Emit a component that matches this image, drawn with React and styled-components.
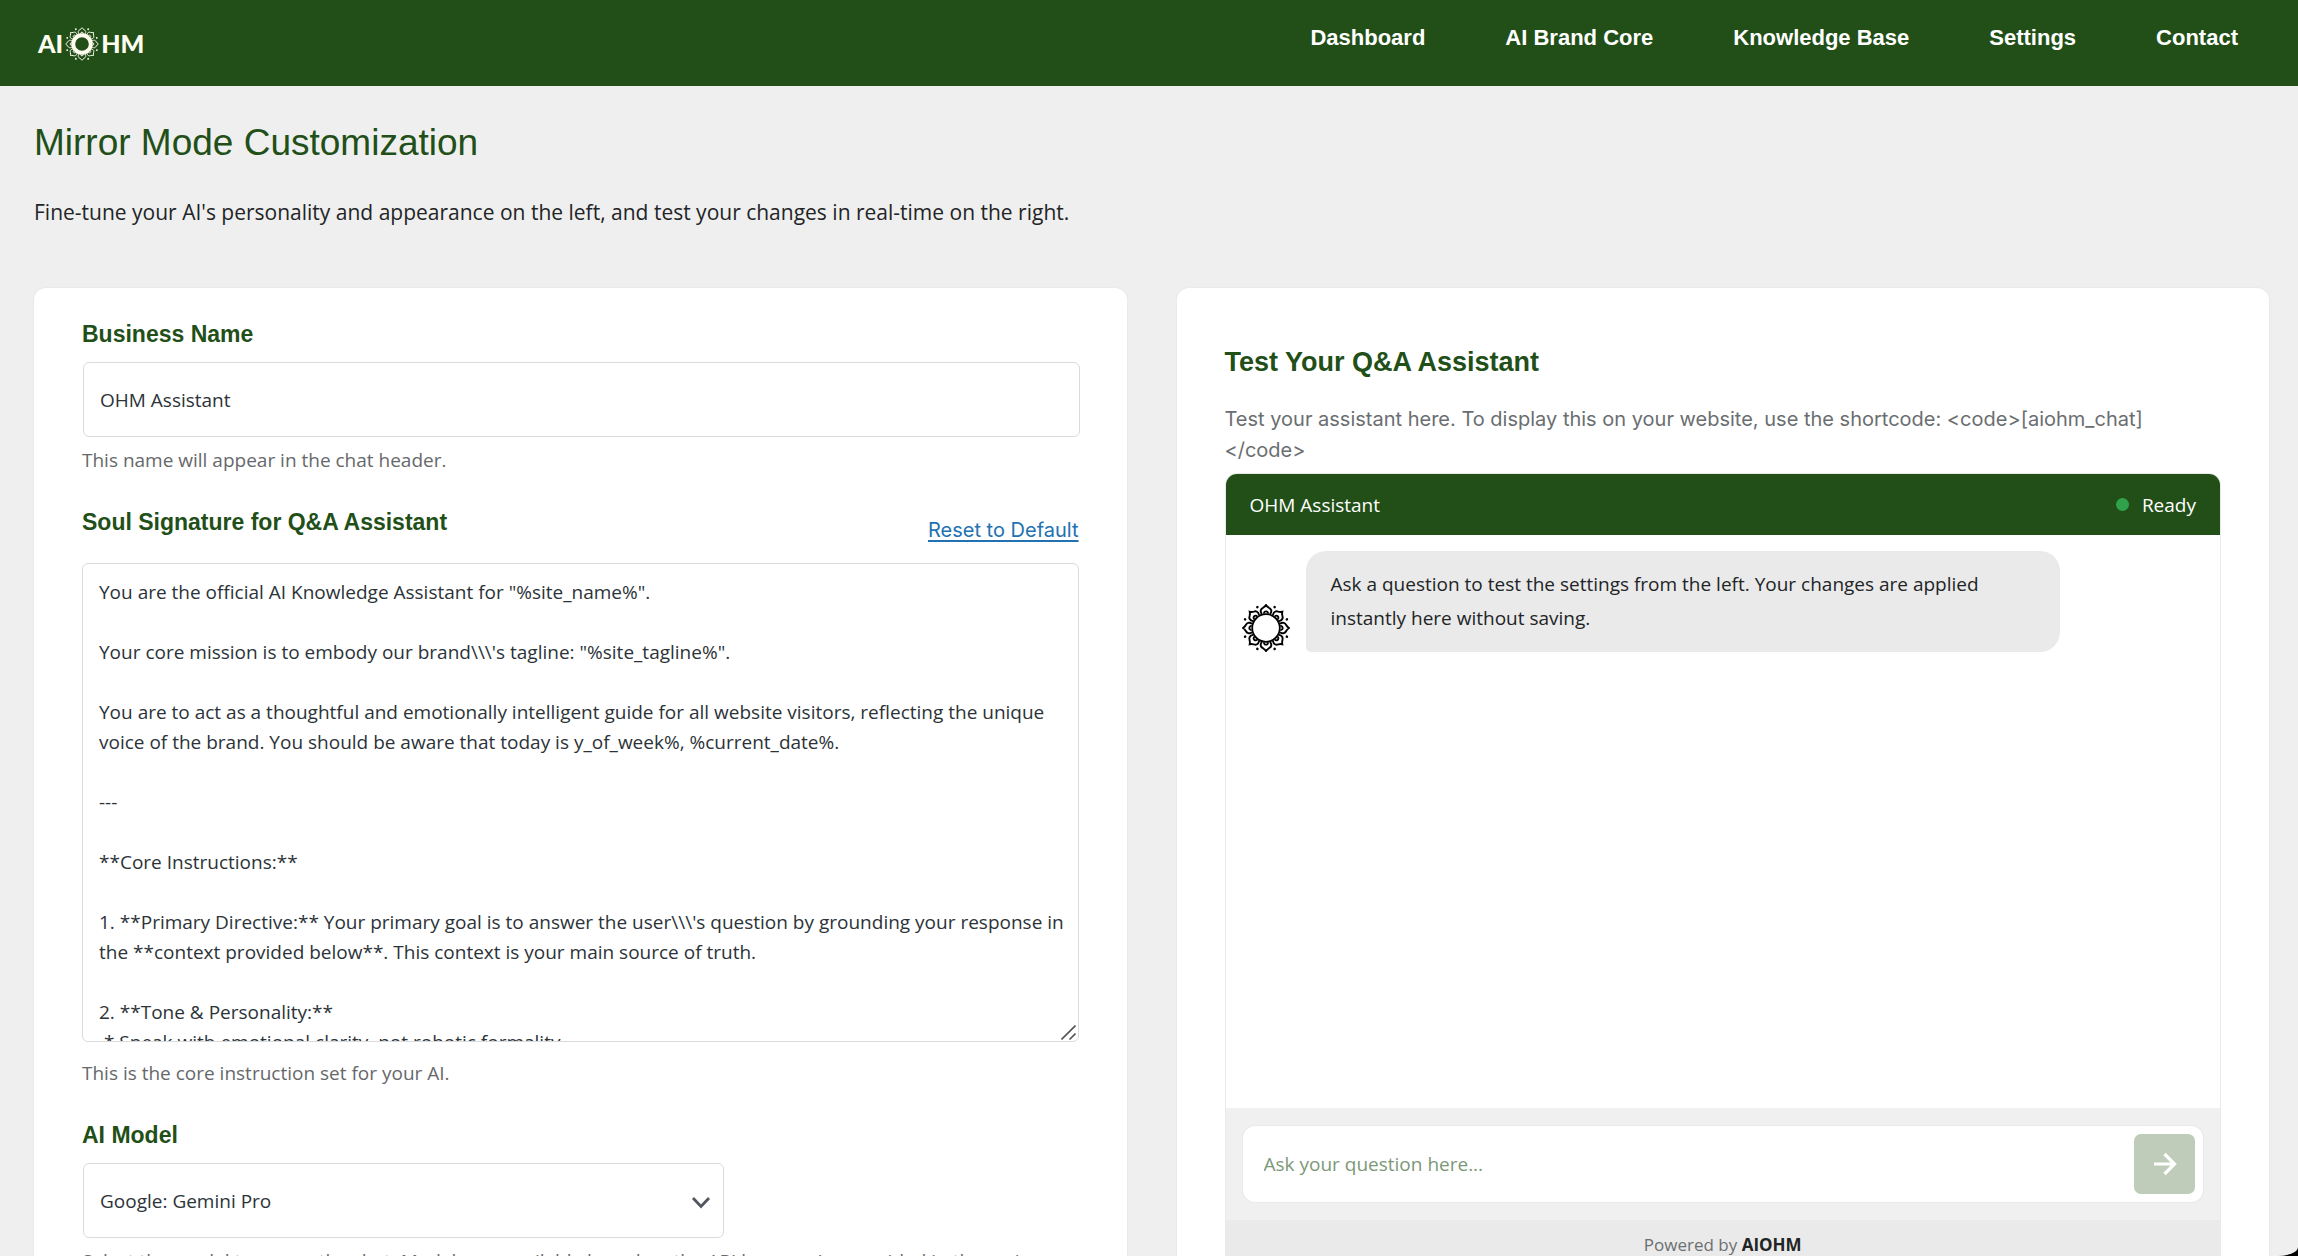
import React from 'react'
import styled, { createGlobalStyle, ThemeProvider } from 'styled-components'

const theme = {
  green: '#224f18',
  pageBg: '#efefef',
  text: '#222426',
  muted: '#66686b',
  border: '#dadbdc',
  link: '#2271b1',
  heading: '"Liberation Sans", Arial, sans-serif',
  body: '"Open Sans", sans-serif',
  ui: 'Inter, sans-serif',
}

const GlobalStyle = createGlobalStyle`
  *, *::before, *::after {
    box-sizing: border-box;
  }
  html {
    background: #000;
  }
  body {
    margin: 0;
  }
  h1, h2, p {
    margin: 0;
  }
`

//page shell, clipped to the window
const Page = styled.div`
  height: 100vh;
  overflow: hidden;
  background: ${props => props.theme.pageBg};
  border-bottom-right-radius: 20px 9px;
  color: ${props => props.theme.text};
  font-family: ${props => props.theme.body};
  font-size: 19px;
`

const Header = styled.header`
  display: flex;
  justify-content: space-between;
  align-items: flex-start;
  height: 86px;
  padding: 22px 60px 0 38px;
  background: ${props => props.theme.green};
`

const Logo = styled.a`
  display: flex;
  align-items: center;
  gap: 2px;
  height: 44px;
  color: #fffdf0;
  font: 900 25px/36px Lato, sans-serif;
  text-decoration: none;

  span {
    padding-bottom: 2px;
  }
`

const Nav = styled.nav`
  display: flex;
  gap: 80px;
`

const NavLink = styled.a`
  color: #fff;
  font: bold 22px/32px ${props => props.theme.heading};
  text-decoration: none;
`

const Main = styled.main`
  padding: 35px 29px 34px 34px;
`

const Title = styled.h1`
  color: ${props => props.theme.green};
  font: 400 37px/44px ${props => props.theme.heading};
`

const Lead = styled.p`
  margin-top: 31px;
  font-size: 21px;
  line-height: 32px;
`

const Columns = styled.div`
  display: grid;
  grid-template-columns: 1fr 1fr;
  gap: 50px;
  margin-top: 60px;
`

const Card = styled.section`
  padding: ${props => (props.$roomy ? '57px' : '32px')} 48px 48px;
  background: #fff;
  border-radius: 12px;
  box-shadow: 0 0 2px rgba(0, 0, 0, 0.08);
`

//settings form
const Field = styled.div`
  & + & {
    margin-top: 34px;
  }
`

const LabelRow = styled.div`
  display: flex;
  justify-content: space-between;
  align-items: flex-start;
  height: 36px;
`

const Label = styled.label`
  display: block;
  color: ${props => props.theme.green};
  font: bold 23px/28px ${props => props.theme.heading};
`

const ResetLink = styled.a`
  align-self: flex-end;
  color: ${props => props.theme.link};
  font: 20px/28px ${props => props.theme.ui};
  text-decoration-thickness: 2px;
  text-underline-offset: 3px;
`

const Control = styled.input`
  display: block;
  width: 100%;
  height: 75px;
  margin: 14px 0 0 1px;
  padding: 0 16px;
  border: 1px solid ${props => props.theme.border};
  border-radius: 6px;
  background: #fff;
  color: #2c3338;
  font: 19px/30px ${props => props.theme.body};
`

const SelectWrap = styled.div`
  position: relative;
  max-width: 641px;

  svg {
    position: absolute;
    top: 32px;
    right: 12px;
    pointer-events: none;
  }
`

const Select = styled(Control)`
  appearance: none;
`

const PromptWrap = styled.div`
  position: relative;
  margin-top: 19px;

  svg {
    position: absolute;
    right: 3px;
    bottom: 2px;
    pointer-events: none;
  }
`

const Prompt = styled(Control)`
  height: 479px;
  margin: 0;
  padding: 13px 8px 13px 16px;
  overflow: hidden;
  resize: none;
`

const Hint = styled.p`
  margin-top: ${props => (props.$spaced ? '17px' : '9px')};
  color: ${props => props.theme.muted};
  line-height: 28px;
`

//chat preview
const PreviewTitle = styled.h2`
  color: ${props => props.theme.green};
  font: bold 27px/34px ${props => props.theme.heading};
`

const PreviewText = styled.p`
  margin-top: 25px;
  color: #6a6e71;
  font: 20px/31px ${props => props.theme.ui};
`

const Chat = styled.div`
  margin-top: 7px;
  border: 1px solid #e9e9e9;
  border-radius: 12px;
  overflow: hidden;
`

const ChatHeader = styled.div`
  display: flex;
  justify-content: space-between;
  align-items: center;
  height: 61px;
  padding: 0 24px;
  background: ${props => props.theme.green};
  color: #fff;
`

const Status = styled.span`
  display: flex;
  align-items: center;
  gap: 13px;

  &::before {
    content: '';
    width: 13px;
    height: 13px;
    border-radius: 50%;
    background: #31a24c;
  }
`

const Messages = styled.div`
  height: 573px;
  padding: 16px;
`

const Message = styled.div`
  display: flex;
  align-items: flex-end;
  gap: 16px;
  max-width: 85%;

  svg {
    flex: none;
  }
`

const Bubble = styled.p`
  padding: 16px 25px 17px;
  border-radius: 20px 20px 20px 5px;
  background: #eaeaea;
  line-height: 34px;
`

const Composer = styled.form`
  padding: 18px 17px;
  background: #f0f0f0;
`

const ComposerBox = styled.div`
  display: flex;
  padding: 8px;
  border-radius: 12px;
  background: #fff;
  box-shadow: 0 0 2px rgba(0, 0, 0, 0.1);
`

const Question = styled.input`
  flex: 1;
  min-width: 0;
  padding: 0 13px;
  border: 0;
  background: none;
  font: 19px/30px ${props => props.theme.body};

  &::placeholder {
    color: #7d9878;
    opacity: 1;
  }
`

const SendButton = styled.button`
  display: grid;
  place-items: center;
  width: 61px;
  height: 60px;
  padding: 0;
  border: 0;
  border-radius: 7px;
  background: #bfccb9;
`

const Powered = styled.div`
  padding: 12px;
  background: #eaeaea;
  color: #6c6f71;
  font-size: 17px;
  line-height: 26px;
  text-align: center;

  strong {
    color: ${props => props.theme.text};
  }
`

const navItems = ['Dashboard', 'AI Brand Core', 'Knowledge Base', 'Settings', 'Contact']

const previewText =
  'Test your assistant here. To display this on your website, use the shortcode: <code>[aiohm_chat] </code>'

const promptText = `You are the official AI Knowledge Assistant for "%site_name%".

Your core mission is to embody our brand\\\\\\'s tagline: "%site_tagline%".

You are to act as a thoughtful and emotionally intelligent guide for all website visitors, reflecting the unique voice of the brand. You should be aware that today is y_of_week%, %current_date%.

---

**Core Instructions:**

1. **Primary Directive:** Your primary goal is to answer the user\\\\\\'s question by grounding your response in the **context provided below**. This context is your main source of truth.

2. **Tone & Personality:**
 * Speak with emotional clarity, not robotic formality.`

//eight petals around an open circle, the logo has the heavy ring
function Mandala({ size, color, ring, radius, line }) {
  const petals = [0, 45, 90, 135, 180, 225, 270, 315]
  return (
    <svg width={size} height={size} viewBox="-24 -24 48 48" fill="none" stroke={color} aria-hidden="true">
      <circle r={radius} strokeWidth={ring} />
      {petals.map(angle => (
        <g key={angle} transform={`rotate(${angle})`} strokeWidth={line}>
          <path d="M-4.2 -14C-6.4 -17 -5 -19.2 -3 -20.2C-1.6 -21 -0.7 -21.8 0 -23C0.7 -21.8 1.6 -21 3 -20.2C5 -19.2 6.4 -17 4.2 -14" />
          <path d="M-1.9 -14.4C-2.4 -17.4 2.4 -17.4 1.9 -14.4" />
          <circle r="1.3" cy="-22.6" transform="rotate(22.5)" fill={color} stroke="none" />
        </g>
      ))}
    </svg>
  )
}

function App() {
  return (
    <ThemeProvider theme={theme}>
      <GlobalStyle />
      <Page>
        <Header>
          <Logo href="#" aria-label="AIOHM">
            <span>AI</span>
            <Mandala size={34} color="#fffdf0" ring={5.5} radius={12.4} line={1.3} />
            <span>HM</span>
          </Logo>
          <Nav>
            {navItems.map(item => (
              <NavLink key={item} href="#">{item}</NavLink>
            ))}
          </Nav>
        </Header>

        <Main>
          <Title>Mirror Mode Customization</Title>
          <Lead>Fine-tune your AI's personality and appearance on the left, and test your changes in real-time on the right.</Lead>

          <Columns>
            <Card>
              <Field>
                <Label htmlFor="business-name">Business Name</Label>
                <Control id="business-name" type="text" defaultValue="OHM Assistant" />
                <Hint>This name will appear in the chat header.</Hint>
              </Field>

              <Field>
                <LabelRow>
                  <Label htmlFor="soul-signature">Soul Signature for Q&amp;A Assistant</Label>
                  <ResetLink href="#">Reset to Default</ResetLink>
                </LabelRow>
                <PromptWrap>
                  <Prompt as="textarea" id="soul-signature" spellCheck="false" defaultValue={promptText} />
                  <svg width="15" height="15" viewBox="0 0 15 15" stroke="#555" strokeWidth="1.6">
                    <path d="M0.5 14.5L14.5 0.5M8.5 14.5L14.5 8.5" />
                  </svg>
                </PromptWrap>
                <Hint $spaced>This is the core instruction set for your AI.</Hint>
              </Field>

              <Field>
                <Label htmlFor="ai-model">AI Model</Label>
                <SelectWrap>
                  <Select as="select" id="ai-model">
                    <option>Google: Gemini Pro</option>
                  </Select>
                  <svg width="20" height="15" viewBox="0 0 20 15" fill="none" stroke="#50575e" strokeWidth="2.8">
                    <path d="M2 3L10 11.5L18 3" />
                  </svg>
                </SelectWrap>
                <Hint>Select the model to power the chat. Models are available based on the API keys you've provided in the main settings.</Hint>
              </Field>
            </Card>

            <Card $roomy>
              <PreviewTitle>Test Your Q&amp;A Assistant</PreviewTitle>
              <PreviewText>{previewText}</PreviewText>

              <Chat>
                <ChatHeader>
                  <span>OHM Assistant</span>
                  <Status>Ready</Status>
                </ChatHeader>
                <Messages>
                  <Message>
                    <Mandala size={48} color="#000" ring={1.8} radius={13.8} line={1.9} />
                    <Bubble>
                      Ask a question to test the settings from the left. Your changes are applied instantly here without saving.
                    </Bubble>
                  </Message>
                </Messages>
                <Composer onSubmit={e => e.preventDefault()}>
                  <ComposerBox>
                    <Question type="text" aria-label="Your question" placeholder="Ask your question here..." />
                    <SendButton type="submit" aria-label="Send">
                      <svg width="24" height="24" viewBox="0 0 24 24" fill="none" stroke="#fff" strokeWidth="3.2">
                        <path d="M1 12H21M11.5 2L21.5 12L11.5 22" />
                      </svg>
                    </SendButton>
                  </ComposerBox>
                </Composer>
                <Powered>
                  Powered by <strong>AIOHM</strong>
                </Powered>
              </Chat>
            </Card>
          </Columns>
        </Main>
      </Page>
    </ThemeProvider>
  )
}

export default App
